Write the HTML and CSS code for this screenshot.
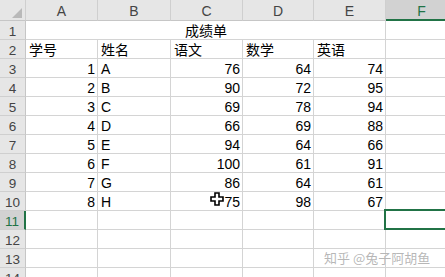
FILE: index.html
```html
<!DOCTYPE html>
<html lang="zh-CN">
<head>
  <meta charset="UTF-8">
  <meta name="viewport" content="width=device-width, initial-scale=1.0">
  <title>成绩单</title>
  <link rel="stylesheet" href="styles.css">
</head>
<body>
  <div class="sheet">
    <!-- column headers -->
    <div class="hd corner">
      <svg class="tri" width="10" height="10" viewBox="0 0 10 10"><polygon points="10,0 10,10 0,10" fill="#b9b9b9"/></svg>
    </div>
    <div class="hd">A</div>
    <div class="hd">B</div>
    <div class="hd">C</div>
    <div class="hd">D</div>
    <div class="hd">E</div>
    <div class="hd active">F</div>

    <div class="rh">1</div>
    <div class="c merge">成绩单</div>
    <div class="c"></div>

    <div class="rh">2</div>
    <div class="c">学号</div>
    <div class="c">姓名</div>
    <div class="c">语文</div>
    <div class="c">数学</div>
    <div class="c">英语</div>
    <div class="c"></div>

    <div class="rh">3</div>
    <div class="c num">1</div><div class="c">A</div><div class="c num">76</div><div class="c num">64</div><div class="c num">74</div><div class="c"></div>
    <div class="rh">4</div>
    <div class="c num">2</div><div class="c">B</div><div class="c num">90</div><div class="c num">72</div><div class="c num">95</div><div class="c"></div>
    <div class="rh">5</div>
    <div class="c num">3</div><div class="c">C</div><div class="c num">69</div><div class="c num">78</div><div class="c num">94</div><div class="c"></div>
    <div class="rh">6</div>
    <div class="c num">4</div><div class="c">D</div><div class="c num">66</div><div class="c num">69</div><div class="c num">88</div><div class="c"></div>
    <div class="rh">7</div>
    <div class="c num">5</div><div class="c">E</div><div class="c num">94</div><div class="c num">64</div><div class="c num">66</div><div class="c"></div>
    <div class="rh">8</div>
    <div class="c num">6</div><div class="c">F</div><div class="c num">100</div><div class="c num">61</div><div class="c num">91</div><div class="c"></div>
    <div class="rh">9</div>
    <div class="c num">7</div><div class="c">G</div><div class="c num">86</div><div class="c num">64</div><div class="c num">61</div><div class="c"></div>
    <div class="rh">10</div>
    <div class="c num">8</div><div class="c">H</div><div class="c num">75</div><div class="c num">98</div><div class="c num">67</div><div class="c"></div>

    <div class="rh active">11</div>
    <div class="c"></div><div class="c"></div><div class="c"></div><div class="c"></div><div class="c"></div><div class="c"></div>
    <div class="rh">12</div>
    <div class="c"></div><div class="c"></div><div class="c"></div><div class="c"></div><div class="c"></div><div class="c"></div>
    <div class="rh">13</div>
    <div class="c"></div><div class="c"></div><div class="c"></div><div class="c"></div><div class="c"></div><div class="c"></div>
    <div class="rh">14</div>
    <div class="c"></div><div class="c"></div><div class="c"></div><div class="c"></div><div class="c"></div><div class="c"></div>

    <!-- selected cell F11 -->
    <div class="selection"></div>

    <!-- mouse cursor -->
    <svg class="cursor" width="14" height="14" viewBox="-1 -1 14 14">
      <polygon points="4,0 8,0 8,4 12,4 12,8 8,8 8,12 4,12 4,8 0,8 0,4 4,4" fill="#fff" stroke="#000" stroke-width="1.6"/>
    </svg>

    <div class="watermark">知乎 @兔子阿胡鱼</div>
  </div>
</body>
</html>
```

FILE: styles.css
```css
body{
  margin: 0;
  overflow: hidden;
  background-color: #fff;
  font-family: "Liberation Sans", "Noto Sans CJK SC", sans-serif;
}
.sheet{
  position: relative;
  display: grid;
  grid-template-columns: 26px 72px 73px 72px 71px 72px 72px;
  grid-template-rows: 21px;
  grid-auto-rows: 19px;
  width: 458px;
}
.hd, .rh, .c{
  box-sizing: border-box;
  border-right: 1px solid #d4d4d4;
  border-bottom: 1px solid #d4d4d4;
  white-space: nowrap;
  overflow: hidden;
}
.hd{
  background-color: #e6e6e6;
  border-right-color: #cfcfcf;
  border-bottom-color: #c6c6c6;
  color: #444;
  font-size: 14px;
  text-align: center;
  padding-top: 3px;
  line-height: 16px;
}
.corner{
  position: relative;
}
.tri{
  position: absolute;
  right: 3px;
  bottom: 2px;
}
.rh{
  background-color: #e6e6e6;
  border-right-color: #c6c6c6;
  border-bottom-color: #cfcfcf;
  color: #444;
  font-size: 13.5px;
  text-align: center;
  padding-top: 3px;
  line-height: 15px;
}
.hd.active{
  background-color: #d2d2d2;
  border-bottom: 2px solid #217346;
  color: #217346;
}
.rh.active{
  background-color: #d2d2d2;
  border-right: 2px solid #217346;
  color: #217346;
}
.c{
  color: #000;
  font-size: 14px;
  padding: 3px 2px 0 3px;
  line-height: 15px;
}
.num{
  text-align: right;
  padding-right: 2px;
}
.merge{
  grid-column: span 5;
  text-align: center;
}
.selection{
  position: absolute;
  left: 384px;
  top: 209px;
  width: 72px;
  height: 21px;
  box-sizing: border-box;
  border: 2px solid #217346;
}
.cursor{
  position: absolute;
  left: 210px;
  top: 192px;
}
.watermark{
  position: absolute;
  left: 324px;
  top: 248px;
  font-family: "Noto Sans CJK SC", sans-serif;
  font-size: 13px;
  color: rgba(160, 160, 160, 0.75);
  text-shadow: 0 0 1px #fff;
}
```
